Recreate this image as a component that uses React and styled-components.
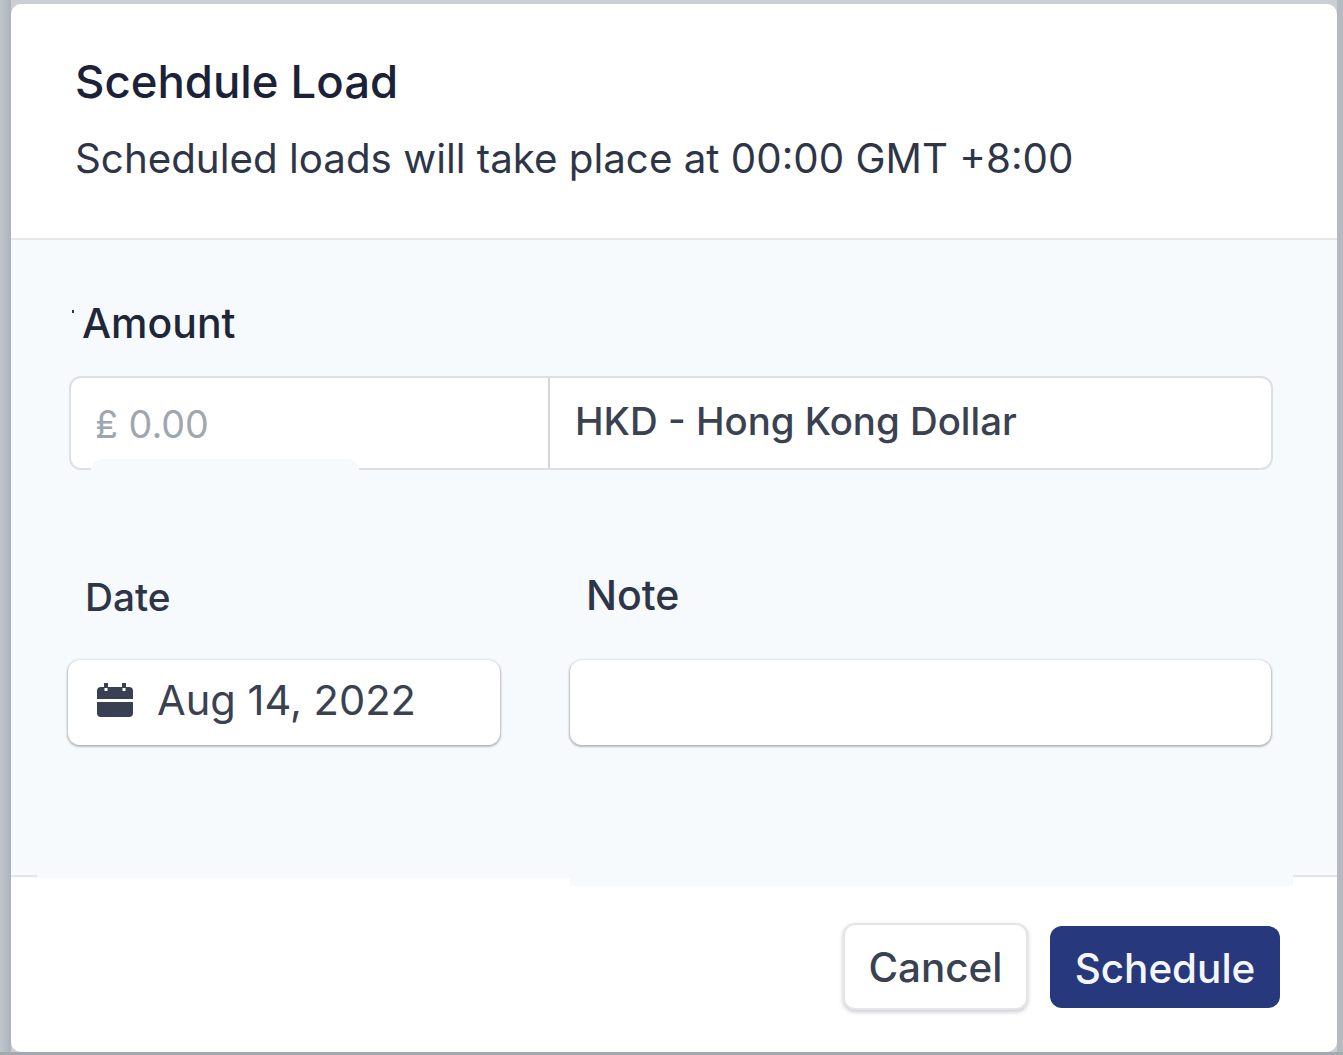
import React from "react";
import styled, { createGlobalStyle } from "styled-components";

const Global = createGlobalStyle`
  html, body { margin: 0; padding: 0; width: 1343px; height: 1055px; overflow: hidden; background: #c9cdd2; }
  * { box-sizing: border-box; }
`;
const Page = styled.div`
  width: 1343px; height: 1055px; padding: 4px 6px 3px 11px;
  background:
    linear-gradient(0deg, #a4a8af 3px, transparent 3px),
    linear-gradient(270deg, #b6bac0 6px, transparent 6px),
    linear-gradient(90deg, #c2c6cb 0, #abb2bc 11px, transparent 11px),
    #cbced2;
  font-family: Inter, "Liberation Sans", sans-serif;
`;
const Modal = styled.div`
  height: 1048px; background: #fff; border-radius: 10px; overflow: hidden;
  display: flex; flex-direction: column;
`;
const Header = styled.header`
  height: 236px; padding: 50px 65px 0 64px; border-bottom: 2px solid #e4e8ec;
`;
const Title = styled.h2`
  margin: 0; font-size: 45.500px; line-height: 56px; font-weight: 500; color: #1b2238;
`;
const Subtitle = styled.p`
  margin: 25px 0 0; font-size: 40.300px; line-height: 48px; font-weight: 400; color: #2e3547;
`;
const Body = styled.div`
  position: relative; height: 638px; background: #f6fafd; padding: 58px 65px 0 57px;
`;
const Label = styled.label`
  display: block; font-size: 41px; line-height: 50px; font-weight: 500; color: #2e3547;
`;
const AmountLabel = styled(Label)`
  position: relative; padding-left: 14px; color: #1f2638;
  &::before {
    content: ""; position: absolute; left: 4px; top: 12px; width: 2px; height: 3px; background: #2e3547;
  }
`;
const GroupWrap = styled.div`
  position: relative; margin: 28px 0 0 1px; width: 1204px;
`;
const Group = styled.div`
  display: flex; height: 94px;
  background: #fff; border: 2px solid #dcdfe4; border-radius: 12px; overflow: hidden;
`;
const AmountCell = styled.div`
  width: 479px; border-right: 2px solid #d3d6db; padding: 22px 0 0 24px;
  font-size: 37.700px; line-height: 48px; color: #a0a6b0;
`;
const CurrencyCell = styled.div`
  flex: 1; padding: 19px 0 0 25px; font-size: 38.400px; line-height: 48px; font-weight: 500; color: #3a4150;
`;
const BorderPatch = styled.div`
  position: absolute; left: 22px; top: 83px; width: 268px; height: 14px;
  background: #f6fafd; border-radius: 12px 12px 0 0;
`;
const Row = styled.div`
  display: flex; gap: 70px; margin-top: 100px;
`;
const Column = styled.div`
  display: flex; flex-direction: column;
`;
const DateLabel = styled(Label)`
  padding-left: 17px; font-size: 38.800px; margin-top: 2px;
`;
const NoteLabel = styled(Label)`
  padding-left: 16px;
`;
const Field = styled.div`
  width: ${(p) => p.$w}px; height: 85px; margin-top: ${(p) => p.$mt}px;
  background: #fff; border-radius: 12px;
  box-shadow: 0 1px 2px 1px rgba(90, 95, 105, 0.42);
  display: flex; align-items: center; gap: 24px; padding: 0 29px 5px;
  font-size: 41.600px; color: #3a4150;
`;
const BodyOverhang = styled.div`
  position: absolute; left: 559px; right: 44px; top: 637px; height: 9px; background: #f6fafd;
`;
const EdgeLine = styled.div`
  position: absolute; top: 635px; height: 2px; background: #e2e5e9;
  ${(p) => (p.$side === "left" ? "left: 0; width: 26px;" : "right: 0; width: 44px;")}
`;
const Footer = styled.footer`
  flex: 1; display: flex; justify-content: flex-end; align-items: flex-start; gap: 22px;
  padding: 45px 57px 0 0;
`;
const CancelButton = styled.button`
  width: 185px; height: 87px; border: 2px solid #e3e5e8; border-radius: 12px; background: #fff;
  box-shadow: 0 2px 4px rgba(60, 65, 75, 0.28);
  font: 500 40.400px Inter, "Liberation Sans", sans-serif; color: #3a4150; padding: 2px 0 0;
`;
const ScheduleButton = styled.button`
  width: 230px; height: 82px; margin-top: 3px; border: 0; border-radius: 12px; background: #27397c;
  font: 500 40.400px Inter, "Liberation Sans", sans-serif; color: #f4f6fb; padding: 2px 0 0;
`;
const CalendarIcon = () => (
  <svg width="36" height="34" viewBox="0 0 36 34" fill="#3a4054">
    <path d="M7 0h4v4h14V0h4v4h3a4 4 0 0 1 4 4v8H0V8a4 4 0 0 1 4-4h3z" />
    <path d="M0 19h36v11a4 4 0 0 1-4 4H4a4 4 0 0 1-4-4z" />
    <rect x="7.500" y="5" width="3" height="3" fill="#fff" />
    <rect x="25.500" y="5" width="3" height="3" fill="#fff" />
  </svg>
);

export default function App() {
  return (
    <Page>
      <Global />
      <Modal>
        <Header>
          <Title>Scehdule Load</Title>
          <Subtitle>Scheduled loads will take place at 00:00 GMT +8:00</Subtitle>
        </Header>
        <Body>
          <AmountLabel>Amount</AmountLabel>
          <GroupWrap>
            <Group>
              <AmountCell>₤ 0.00</AmountCell>
              <CurrencyCell>HKD - Hong Kong Dollar</CurrencyCell>
            </Group>
            <BorderPatch />
          </GroupWrap>
          <Row>
            <Column>
              <DateLabel>Date</DateLabel>
              <Field $w={432} $mt={38}>
                <CalendarIcon />
                Aug 14, 2022
              </Field>
            </Column>
            <Column>
              <NoteLabel>Note</NoteLabel>
              <Field $w={701} $mt={40} />
            </Column>
          </Row>
          <EdgeLine $side="left" />
          <EdgeLine $side="right" />
          <BodyOverhang />
        </Body>
        <Footer>
          <CancelButton>Cancel</CancelButton>
          <ScheduleButton>Schedule</ScheduleButton>
        </Footer>
      </Modal>
    </Page>
  );
}
